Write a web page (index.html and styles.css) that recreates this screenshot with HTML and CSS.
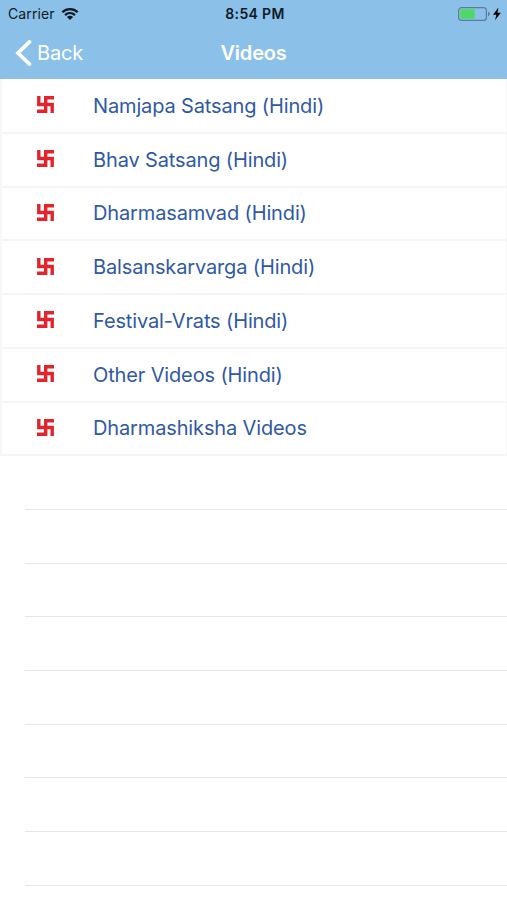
FILE: index.html
```
<!DOCTYPE html>
<html lang="en">
<head>
    <meta charset="UTF-8">
    <meta name="viewport" content="width=device-width, initial-scale=1.0">
    <title>Videos</title>
    <link rel="stylesheet" href="styles.css">
</head>
<body>

<svg class="defs" width="0" height="0">
    <symbol id="swastik" viewBox="0 0 17 17">
        <path d="M1.8 0V8.5H15.2V17M17 1.8H8.7V15.2H0" fill="none" stroke="#e2242c" stroke-width="3.4"/>
    </symbol>
</svg>

<header>
    <div class="status-bar">
        <div class="carrier">
            <span>Carrier</span>
            <svg width="18" height="14" viewBox="0 0 18 14">
                <path d="M1.3 5.2C5.6 1 12.4 1 16.7 5.2M4 8.1C6.9 5.4 11.1 5.4 14 8.1" fill="none" stroke="#0b1a26" stroke-width="2.3"/>
                <path d="M5.9 9.9C7.7 8.3 10.3 8.3 12.1 9.9L9 13Z" fill="#0b1a26"/>
            </svg>
        </div>
        <div class="time">8:54 PM</div>
        <div class="battery">
            <svg width="44" height="16" viewBox="0 0 44 16">
                <rect x="0.6" y="1.6" width="27.8" height="12.8" rx="3" fill="none" stroke="#5c7d96" stroke-width="1.2"/>
                <rect x="2.3" y="3.3" width="14.4" height="9.4" rx="1" fill="#4cd964"/>
                <path d="M30 5.8C32.4 6.6 32.4 9.4 30 10.2Z" fill="#5c7d96"/>
                <path d="M40.4 1.6L35 8.8H38.4L37 14.2L42.8 6.8H39.5Z" fill="#000"/>
            </svg>
        </div>
    </div>
    <div class="nav-bar">
        <div class="back">
            <svg width="17" height="26" viewBox="0 0 17 26">
                <path d="M14.4 2L3 13L14.4 24" fill="none" stroke="#fff" stroke-width="3.8" stroke-linecap="round"/>
            </svg>
            <span>Back</span>
        </div>
        <h1>Videos</h1>
    </div>
</header>

<ul class="video-list">
    <li><svg class="icon"><use href="#swastik"/></svg><span>Namjapa Satsang (Hindi)</span></li>
    <li><svg class="icon"><use href="#swastik"/></svg><span>Bhav Satsang (Hindi)</span></li>
    <li><svg class="icon"><use href="#swastik"/></svg><span>Dharmasamvad (Hindi)</span></li>
    <li><svg class="icon"><use href="#swastik"/></svg><span>Balsanskarvarga (Hindi)</span></li>
    <li><svg class="icon"><use href="#swastik"/></svg><span>Festival-Vrats (Hindi)</span></li>
    <li><svg class="icon"><use href="#swastik"/></svg><span>Other Videos (Hindi)</span></li>
    <li><svg class="icon"><use href="#swastik"/></svg><span>Dharmashiksha Videos</span></li>
</ul>

<ul class="empty-rows">
    <li></li>
    <li></li>
    <li></li>
    <li></li>
    <li></li>
    <li></li>
    <li></li>
    <li></li>
</ul>

</body>
</html>
```

FILE: styles.css
```
* {
    box-sizing: border-box;
}
body {
    margin: 0;
    height: 900px;
    overflow: hidden;
    background-color: #fff;
    font-family: Inter, "Liberation Sans", sans-serif;
}
.defs {
    display: none;
}
svg {
    flex-shrink: 0;
}
header {
    height: 79px;
    background-color: #8bc0e9;
}
.status-bar {
    display: grid;
    grid-template-columns: 1fr auto 1fr;
    align-items: center;
    height: 27px;
    padding: 0 5px 0 8px;
    font-size: 14px;
    letter-spacing: 0.1px;
    color: #0b1a26;
}
.carrier {
    display: flex;
    align-items: center;
    gap: 6px;
}
.time {
    font-size: 14px;
    font-weight: 600;
    letter-spacing: 0.35px;
}
.battery {
    display: flex;
    justify-content: flex-end;
}
.nav-bar {
    display: grid;
    grid-template-columns: 1fr auto 1fr;
    align-items: center;
    height: 51px;
    padding: 0 15px;
    color: #fff;
}
.back {
    display: flex;
    align-items: center;
    gap: 5px;
    font-size: 20px;
    letter-spacing: -0.2px;
}
h1 {
    margin: 0;
    font-size: 20px;
    font-weight: 600;
    letter-spacing: -0.2px;
}
ul {
    margin: 0;
    padding: 0;
    list-style: none;
}
.video-list {
    padding-top: 1px;
    border-left: 2px solid #f7f7f7;
    border-right: 1px solid #f7f7f7;
}
.video-list li {
    display: flex;
    align-items: center;
    gap: 39px;
    height: 53.75px;
    padding-left: 35px;
    border-bottom: 2px solid #f5f5f5;
    font-size: 20px;
    letter-spacing: -0.14px;
    color: #3059a5;
}
.icon {
    width: 17px;
    height: 17px;
    margin-top: -2px;
}
.empty-rows li {
    height: 53.7px;
    margin-left: 25px;
    border-bottom: 1px solid #e6e6e7;
}
```
